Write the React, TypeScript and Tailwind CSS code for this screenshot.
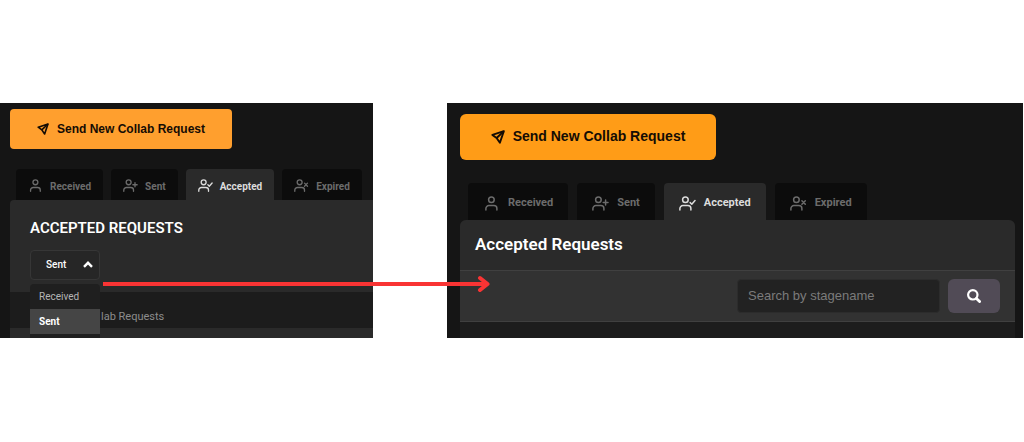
import { useState } from 'react'
import clsx from 'clsx'

type TabId = 'received' | 'sent' | 'accepted' | 'expired'

const tabs: { id: TabId; label: string }[] = [
  { id: 'received', label: 'Received' },
  { id: 'sent', label: 'Sent' },
  { id: 'accepted', label: 'Accepted' },
  { id: 'expired', label: 'Expired' },
]

const badges: Record<TabId, string> = {
  received: '',
  sent: 'M11.2 6.5h4.8M13.6 4.1v4.8',
  accepted: 'M11.2 6.6l1.6 1.6 3.2-3.6',
  expired: 'M11.9 4.7l3.4 3.6M15.3 4.7l-3.4 3.6',
}

function UserIcon({ id, className }: { id: TabId; className: string }) {
  return (
    <svg
      viewBox={id === 'received' ? '-2 0 17 15' : '0 0 17 15'}
      fill="none"
      stroke="currentColor"
      strokeWidth="1.5"
      strokeLinecap="round"
      strokeLinejoin="round"
      className={className}
    >
      <circle cx="6.4" cy="3.7" r="2.8" />
      <path d="M0.9 14v-1.4a3 3 0 0 1 3-3h5a3 3 0 0 1 3 3V14" />
      {badges[id] && <path d={badges[id]} />}
    </svg>
  )
}

function SendIcon({ className }: { className: string }) {
  return (
    <svg
      viewBox="0 0 14 14"
      fill="none"
      stroke="currentColor"
      strokeWidth="1.9"
      strokeLinejoin="round"
      className={className}
    >
      <path d="M12.8 1.2L1.4 4.9 5.6 8l3.3 4.8z" />
      <path d="M12.8 1.2L5.6 8" />
    </svg>
  )
}

function Tabs({ compact }: { compact?: boolean }) {
  const [active, setActive] = useState<TabId>('accepted')

  return (
    <div className={clsx('flex', compact ? 'gap-2 px-1.5' : 'gap-[9px] px-2')}>
      {tabs.map((tab) => (
        <button
          key={tab.id}
          onClick={() => setActive(tab.id)}
          className={clsx(
            'flex items-center rounded-t font-bold',
            compact ? 'h-[31px] gap-[7px] px-3 pt-1 text-[10px]' : 'h-[37px] gap-2 px-[15px] pt-1 text-[11px]',
            active === tab.id ? 'bg-[#2a2a2a] text-[#dcdcdc]' : 'bg-[#0c0c0c] text-[#6c6c6c]'
          )}
        >
          <UserIcon id={tab.id} className={compact ? 'w-[15px]' : 'w-[17px]'} />
          <span>{tab.label}</span>
        </button>
      ))}
    </div>
  )
}

function OldRequests() {
  const [filter, setFilter] = useState('Sent')

  return (
    <section className="flex h-[235px] flex-col overflow-hidden bg-[#151515] pt-1.5 pl-2.5">
      <button className="flex h-10 w-[222px] items-center justify-center gap-2 rounded bg-[#ff9f2e] font-['Liberation_Sans',sans-serif] text-[12px] font-bold text-[#150c04]">
        <SendIcon className="size-3" />
        Send New Collab Request
      </button>
      <div className="pt-5">
        <Tabs compact />
      </div>
      <div className="flex-1 rounded-tl bg-[#2a2a2a]">
        <div className="flex h-[92px] flex-col gap-3 px-5 pt-[18px]">
          <h2 className="text-[15px] leading-5 font-semibold text-white">ACCEPTED REQUESTS</h2>
          <div className="relative w-[70px]">
            <button
              aria-expanded="true"
              className="flex h-[30px] w-full items-center justify-between rounded border border-[#363636] bg-[#262626] pr-1.5 pl-[15px] text-[10px] font-medium text-white"
            >
              {filter}
              <svg viewBox="0 0 10 7" fill="none" stroke="currentColor" strokeWidth="2.4" className="w-2.5">
                <path d="M1 5.8L5 1.8l4 4" />
              </svg>
            </button>
            <ul className="absolute top-[34px] left-0 w-full rounded-t bg-[#1f1f1f] pb-2 text-[10px]">
              {['Received', 'Sent'].map((option) => (
                <li key={option}>
                  <button
                    onClick={() => setFilter(option)}
                    className={clsx(
                      'h-[25px] w-full px-[9px] text-left',
                      option === filter ? 'bg-[#454545] font-bold text-white' : 'text-[#b5b5b5]'
                    )}
                  >
                    {option}
                  </button>
                </li>
              ))}
            </ul>
          </div>
        </div>
        <p className="h-9 bg-[#1c1c1c] pt-[15px] pl-[91px] text-[11px] leading-5 text-[#8c8c8c]">lab Requests</p>
      </div>
    </section>
  )
}

function NewRequests() {
  const [query, setQuery] = useState('')

  return (
    <section className="mr-px flex h-[235px] flex-col overflow-hidden bg-[#151515] pt-[11px] pr-2 pl-[13px]">
      <button className="flex h-[46px] w-64 items-center justify-center gap-2 rounded-md bg-[#ff9c17] font-['Liberation_Sans',sans-serif] text-[14px] font-bold text-[#150c04]">
        <SendIcon className="size-3.5" />
        Send New Collab Request
      </button>
      <div className="pt-[23px]">
        <Tabs />
      </div>
      <div className="flex-1 rounded-t-md bg-[#1d1d1d]">
        <h2 className="h-[50px] rounded-t-md bg-[#2a2a2a] px-[15px] text-[17px] leading-[48px] font-semibold text-white">
          Accepted Requests
        </h2>
        <form
          onSubmit={(e) => e.preventDefault()}
          className="flex h-[52px] items-center justify-end gap-2 border-y border-[#404040] bg-[#323232] px-[15px]"
        >
          <input
            type="text"
            aria-label="Search by stagename"
            value={query}
            onChange={(e) => setQuery(e.target.value)}
            placeholder="Search by stagename"
            className="h-[34px] w-[203px] rounded border border-[#2c2c2c] bg-[#222222] px-2.5 font-['Liberation_Sans',sans-serif] text-[13px] text-white placeholder:text-[#7b7b7b]"
          />
          <button
            type="submit"
            aria-label="Search"
            className="flex h-[34px] w-[52px] items-center justify-center rounded-md bg-[#514b56] text-white"
          >
            <svg viewBox="0 0 14 14" fill="none" stroke="currentColor" className="size-3.5">
              <circle cx="5.8" cy="5.8" r="4.7" strokeWidth="2.2" />
              <path d="M9.4 9.4l3.2 3.2" strokeWidth="2.8" strokeLinecap="round" />
            </svg>
          </button>
        </form>
      </div>
    </section>
  )
}

export default function App() {
  return (
    <main className="flex min-h-screen flex-col justify-center bg-white pb-0.5 font-['Roboto',sans-serif]">
      <div className="relative grid grid-cols-[373fr_577fr] gap-[74px]">
        <OldRequests />
        <NewRequests />
        <div className="absolute top-[172px] left-[10.1%] flex w-[37.8%] items-center text-[#f93434]">
          <div className="h-1 flex-1 bg-current" />
          <svg
            viewBox="0 0 14 18"
            fill="none"
            stroke="currentColor"
            strokeWidth="4"
            strokeLinecap="round"
            strokeLinejoin="round"
            className="h-[18px] w-3.5"
          >
            <path d="M0 9h10" strokeLinecap="butt" />
            <path d="M4 3l7.5 6L4 15" />
          </svg>
        </div>
      </div>
    </main>
  )
}
